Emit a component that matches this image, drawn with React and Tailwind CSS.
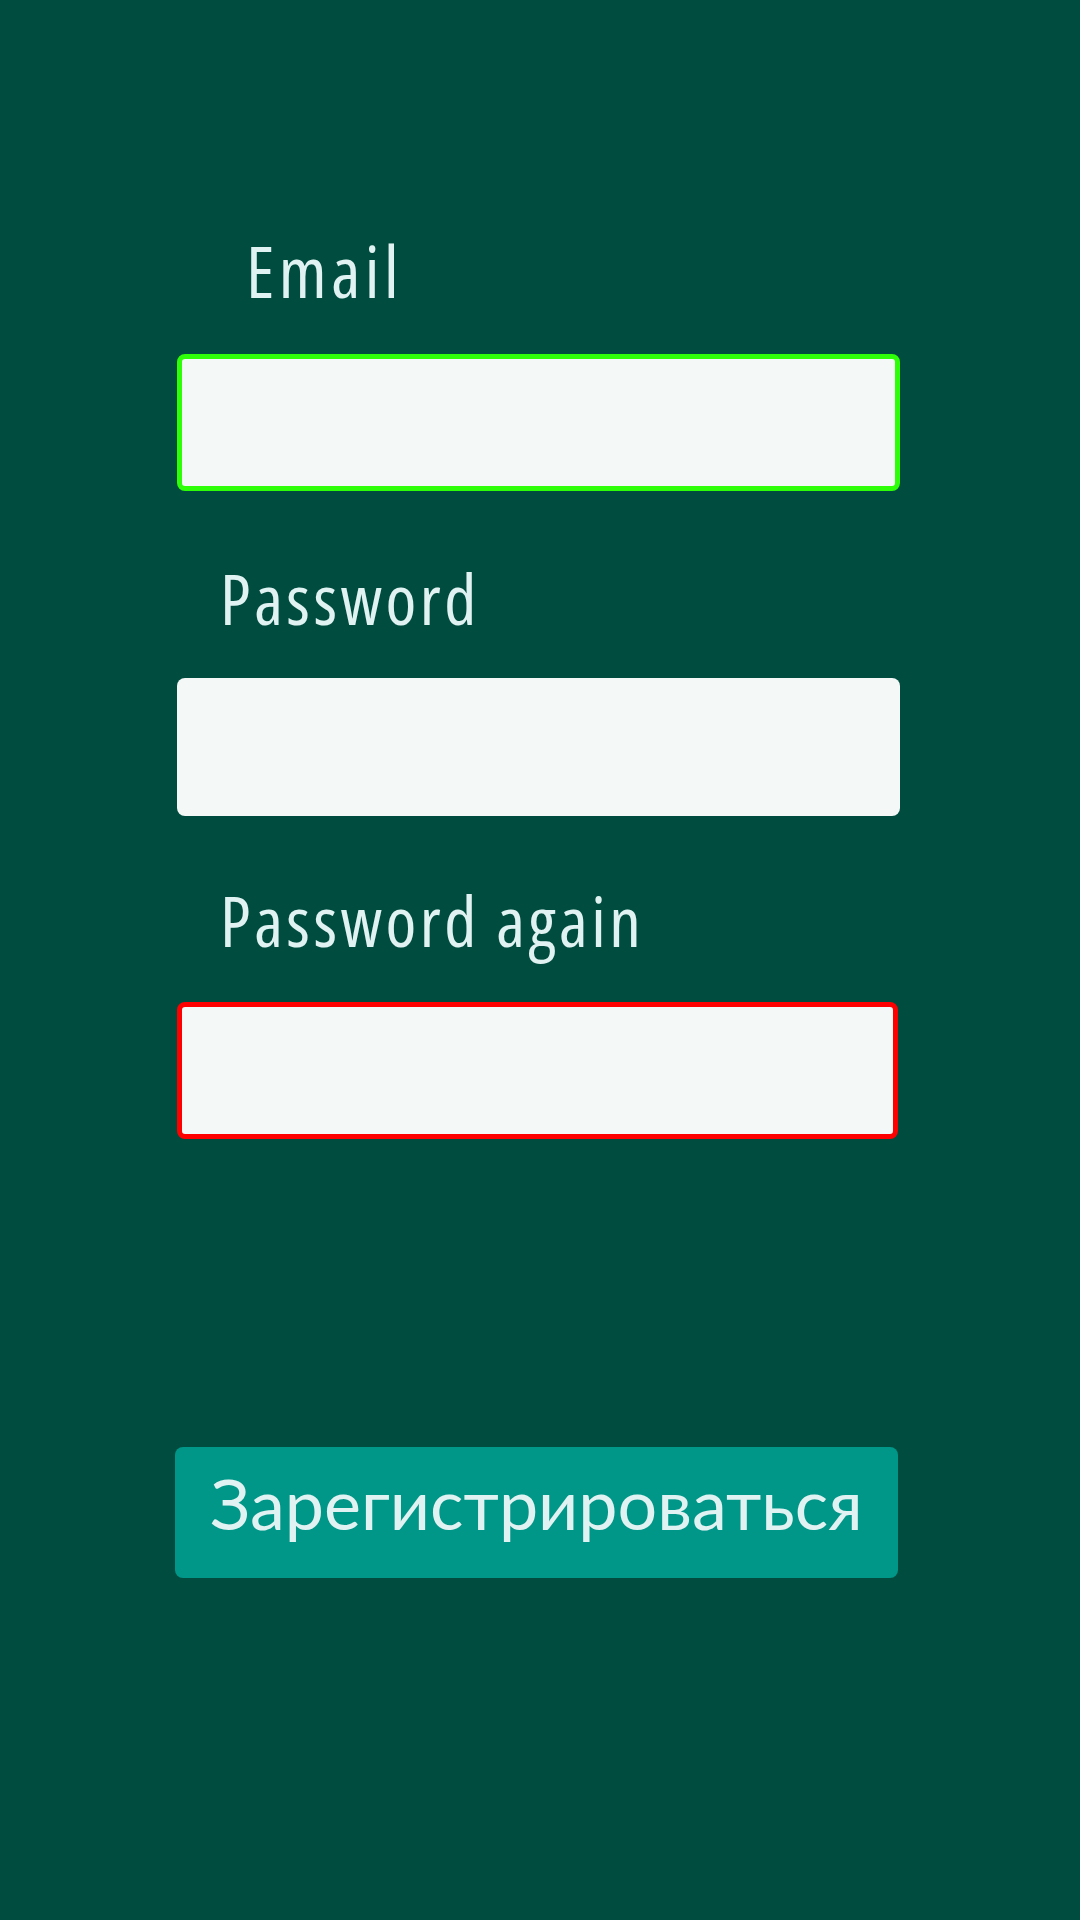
import React from "react";

export default function App() {
  return (
    <div className="min-h-[1920px] w-full bg-[#004d40]">
      <div className="flex w-[900px] flex-col pl-[177px] pt-[236px]">
        <label className="block pl-[69px] font-['Open_Sans',sans-serif] text-[71px] leading-[70px] tracking-[4.5px] text-[#e0f2f1] [font-stretch:82%]">
          Email
        </label>
        <input
          type="email"
          className="mt-[48px] h-[137px] w-[723px] rounded-[8px] border-[5px] border-[#2eff08] bg-[#f4f8f7] outline-none"
        />
        <label className="mt-[72px] block pl-[43px] font-['Open_Sans',sans-serif] text-[70px] leading-[70px] tracking-[3.5px] text-[#e0f2f1] [font-stretch:82%]">
          Password
        </label>
        <input
          type="password"
          className="mt-[45px] h-[138px] w-[723px] rounded-[8px] bg-[#f4f8f7] outline-none"
        />
        <label className="mt-[69px] block pl-[43px] font-['Open_Sans',sans-serif] text-[70px] leading-[70px] tracking-[3.5px] text-[#e0f2f1] [font-stretch:82%]">
          Password again
        </label>
        <input
          type="password"
          className="mt-[47px] h-[137px] w-[721px] rounded-[8px] border-[5px] border-[#ff0000] bg-[#f4f8f7] outline-none"
        />
        <button
          type="button"
          className="-ml-[2px] mt-[308px] h-[131px] w-[723px] rounded-[8px] bg-[#009688] pb-[40px] pt-[21px] text-center font-['Lato',sans-serif] text-[70px] leading-[70px] text-[#e0f2f1]"
        >
          Зарегистрироваться
        </button>
      </div>
    </div>
  );
}
